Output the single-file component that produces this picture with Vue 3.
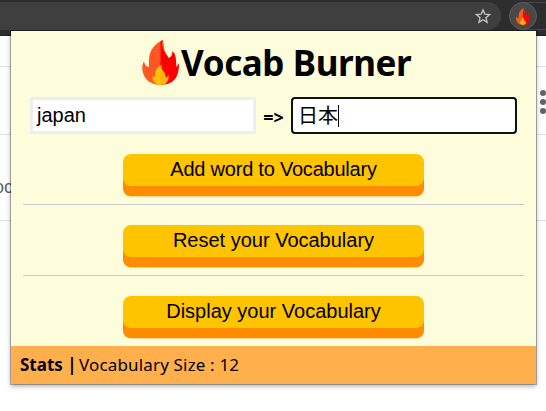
<script setup>
import { ref } from 'vue'

const word = ref('japan')
const meaning = ref('日本')
const vocabularySize = ref(12)
const actions = [
  { label: 'Add word to Vocabulary', compact: true },
  { label: 'Reset your Vocabulary', compact: false },
  { label: 'Display your Vocabulary', compact: false }
]
</script>

<template>
  <div class="browser">
    <header class="toolbar">
      <div class="address">
        <svg class="star" viewBox="0 0 24 24"><path d="M12 2.800l2.800 6.500 7 .6-5.300 4.600 1.600 6.900-6.100-3.700-6.100 3.700 1.600-6.900L2.200 9.900l7-.6z" /></svg>
      </div>
      <div class="extensions">
        <div class="active-extension">
          <svg class="flame" viewBox="0 0 38 46"><use href="#flame-shape" /></svg>
        </div>
      </div>
    </header>
    <div class="page">
      <div class="row first"></div>
      <div class="row second"></div>
      <div class="row third"><span>oc</span></div>
      <div class="dots"><i></i><i></i><i></i></div>
    </div>

    <main class="popup">
      <h1>
        <svg class="logo" viewBox="0 0 38 46">
          <g id="flame-shape">
            <path fill="#ff5722" d="M21.500 0C14 3 7.500 10 7.200 20C7 22 7.300 24.500 7 27.500C4 27.500 3 25 2 22C-.5 26 0 31 1.500 35C4 42 11 46 19 46L25 24Z" />
            <path fill="#f00" d="M21.500 0C19.500 4 20.500 8 23.500 12C25 14.500 26.500 17 27.500 18.500C30 17.500 31.500 15 31 11.500C34 13 35 18 35 22C35.200 24 35 26 35.500 27.500L38 23.500C38 31 37 37 33 41C29.500 44.500 25 46 19 46V1.800Z" />
            <path fill="#ffc107" d="M20.500 25.500C16 27 13.500 31 13.500 34C13.500 36 13.200 37 12.500 38.500C11.500 38 11.500 37 11.500 35.500C9 40 13 46 19 46C25 46 28.500 41 27 35.500C26.500 37 26 38.200 24.500 38.500C23.500 36 24.500 34.500 22 32C20 30 19.500 28 20.500 25.500Z" />
            <path fill="#ff9800" d="M20.500 25.500C19.500 28 20 30 22 32C24.500 34.500 23.500 36 24.500 38.500C26 38.200 26.500 37 27 35.500C28.500 41 25 46 19 46V26.200Z" opacity=".3" />
          </g>
        </svg>
        <span>Vocab Burner</span>
      </h1>
      <div class="fields">
        <div class="field plain">{{ word }}</div>
        <b class="arrow">=&gt;</b>
        <div class="field focused">{{ meaning }}<i class="caret"></i></div>
      </div>
      <div v-for="action in actions" :key="action.label" class="action">
        <button :class="{ compact: action.compact }">{{ action.label }}</button>
      </div>
      <footer><b>Stats |</b><span>Vocabulary Size : {{ vocabularySize }}</span></footer>
    </main>
  </div>
</template>

<style>
body { margin: 0; overflow: hidden; }
</style>

<style scoped>
* { box-sizing: border-box; }
.browser { position: relative; width: 546px; height: 411px; overflow: hidden; background: #fff; font-family: "Liberation Sans", sans-serif; }
.toolbar { display: flex; height: 36px; padding-top: 2px; background: #2d2d2d; border-bottom: 1px solid #202022; }
.address { display: flex; flex: none; align-items: center; justify-content: flex-end; width: 501px; height: 28px; padding-right: 10px; background: #3f3f3f; border-radius: 0 14px 14px 0; }
.star { width: 16px; height: 16px; fill: none; stroke: #c4c4c4; stroke-width: 2; }
.extensions { flex: none; width: 60px; height: 28px; margin-left: 8px; border: 1px solid #464646; border-radius: 14px 0 0 14px; }
.active-extension { display: flex; align-items: center; justify-content: center; width: 28px; height: 28px; margin: -1px; border: 1px solid #5b5b5b; border-radius: 50%; background: #484848; }
.flame { width: 14px; height: 17px; }
.page { position: relative; color: #5f6368; }
.row { border-bottom: 1px solid #dfdfe7; }
.first { height: 31px; }
.second { height: 68px; }
.third { height: 86px; padding-top: 41px; font-size: 18px; line-height: 22px; }
.third span { display: block; margin-left: -6px; }
.dots { position: absolute; left: 540px; top: 54px; display: grid; gap: 3px; }
.dots i { width: 6px; height: 6px; border-radius: 50%; background: #5f6368; }
.popup { position: absolute; left: 11px; top: 31px; display: flex; flex-direction: column; width: 525px; height: 353px; background: #fdfddb; box-shadow: 0 0 0 1px rgba(0,0,0,.28), 0 2px 5px rgba(0,0,0,.35); color: #000; }
h1 { display: flex; flex: none; height: 66px; margin: 0; padding: 9px 0 0 131px; font: 700 35px/46px "Noto Sans", sans-serif; letter-spacing: -.4px; white-space: nowrap; }
.logo { flex: none; width: 37px; height: 45px; margin-right: 2px; }
.fields { display: flex; flex: none; align-items: center; height: 37px; padding-left: 19px; }
.field { display: flex; align-items: center; width: 226px; height: 37px; padding: 0 4px; border: 3px solid #eee; background: #fff; font: 20px/24px "Liberation Sans", "Noto Sans CJK JP", sans-serif; }
.plain { padding-bottom: 1px; }
.focused { padding-left: 5px; border: 2px solid #101014; border-radius: 4px; }
.caret { width: 1px; height: 22px; background: #000; }
.arrow { width: 35px; padding-top: 2px; text-align: center; font: 700 18px/24px "Noto Sans", sans-serif; }
.action { flex: none; height: 71px; margin: 0 12px; padding-top: 20px; border-bottom: 1px solid #c9c9ce; }
.action:nth-last-child(2) { height: 70px; border-bottom: 0; }
button { display: block; width: 301px; height: 32px; margin: 0 0 0 100px; padding: 0 0 2px; border: 0; border-radius: 8px; background: #ffc400; box-shadow: 0 10px 0 #ff8c00, 0 10.500px 0 #ffb13d; color: #000; font: 20px/30px "Liberation Sans", sans-serif; }
.compact { letter-spacing: -.22px; }
footer { display: flex; flex: none; align-items: center; height: 38px; padding-left: 9px; background: #ffb04c; font: 17px/24px "Noto Sans", sans-serif; white-space: nowrap; }
footer b { width: 59px; }
footer span { letter-spacing: .16px; }
</style>
